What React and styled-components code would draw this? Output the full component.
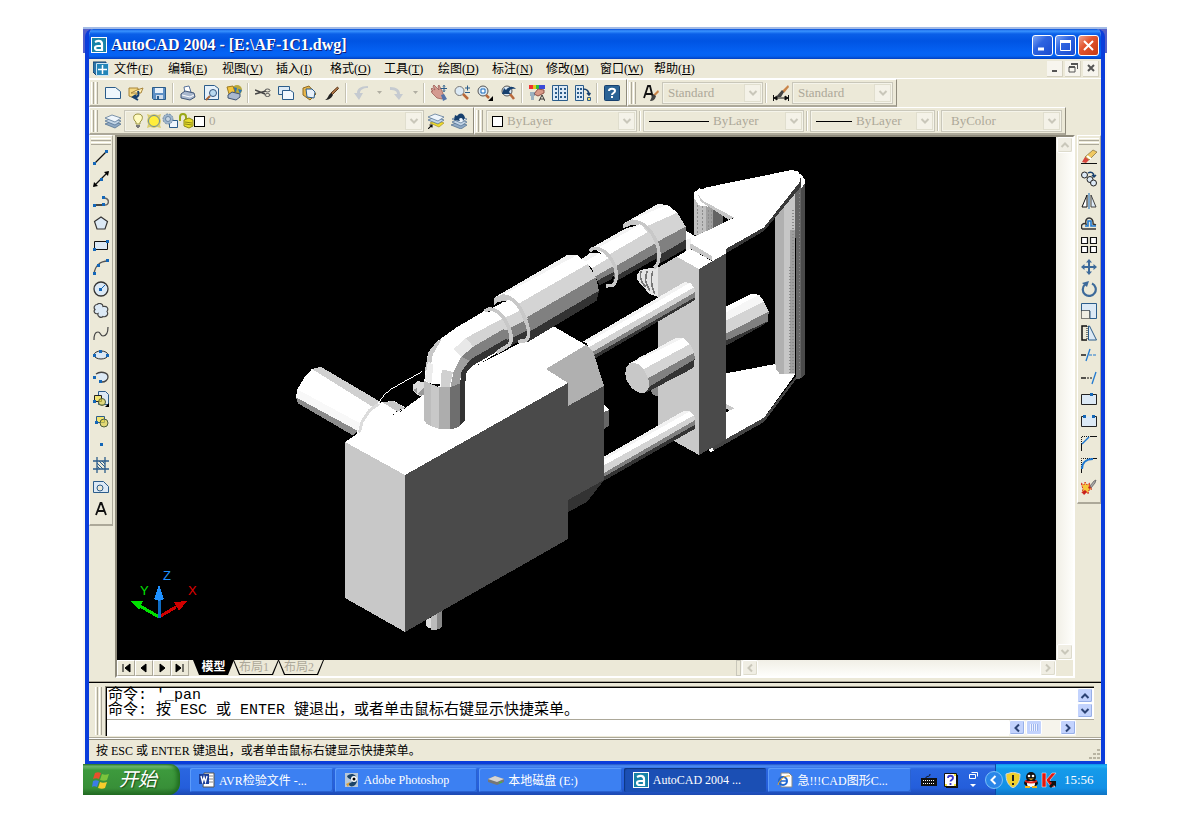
import React, { useState } from 'react';
import styled, { createGlobalStyle, css } from 'styled-components';

const GlobalStyle = createGlobalStyle`
  * { box-sizing: border-box; }
  body {
    margin: 0;
    background: #fff;
    font-family: "Liberation Serif", "Noto Sans CJK SC", serif;
    font-size: 12px;
    color: #000;
  }
  button, input, select {
    font: inherit;
    color: inherit;
    margin: 0;
    padding: 0;
    border: none;
    border-radius: 0;
    background: none;
  }
  svg { display: block; flex: none; }
`;

const Page = styled.div`
  padding: 27px 84px 27px 83px;
`;

const Desktop = styled.div`
  background: linear-gradient(#a3bbe6 2px, #5560c8 2px, #5560c8 26px, #fbfaf4 26px);
`;

const WindowArea = styled.div`
  padding: 2px 2px 0;
`;

const Window = styled.div`
  border: 4px solid #0a3ddb;
  border-top: none;
  border-bottom-width: 3px;
  border-radius: 8px 8px 0 0;
  background: #ece9d8;
  overflow: hidden;
`;

const TitleBar = styled.div`
  display: flex;
  align-items: center;
  gap: 4px;
  height: 30px;
  margin: 0 -4px;
  padding: 2px 6px 0;
  background: linear-gradient(#0a4fd8 0, #3a94ff 2px, #0a5fe8 5px, #0054e3 12px, #0563f5 24px, #0562f2 27px, #0340c0 30px);
`;

const Title = styled.h1`
  flex: 1;
  margin: 0;
  font-size: 16px;
  line-height: 20px;
  font-weight: bold;
  color: #fff;
  text-shadow: 1px 1px 0 #0f1e7a;
`;

const CaptionButton = styled.button`
  width: 21px;
  height: 21px;
  margin-left: -2px;
  display: flex;
  align-items: center;
  justify-content: center;
  border: 1px solid #fff;
  border-radius: 3px;
  background: ${props => props.$close
    ? 'linear-gradient(135deg, #f0a28c, #e2552f 40%, #c73a12)'
    : 'linear-gradient(135deg, #7fa6f5, #2e64e0 40%, #1a4bd0)'};
`;

const MenuBar = styled.div`
  display: flex;
  align-items: center;
  height: 20px;
  padding: 0 2px 0 4px;
  border-bottom: 1px solid #fff;
`;

const Menus = styled.nav`
  flex: 1;
  display: flex;
  padding-left: 5px;
`;

const MenuItem = styled.button`
  width: 54px;
  text-align: left;
  line-height: 18px;
  white-space: nowrap;
`;

const MdiButton = styled.button`
  width: 16px;
  height: 16px;
  margin-left: 2px;
  display: flex;
  align-items: center;
  justify-content: center;
  border-right: 1px solid #d5d1c0;
  border-bottom: 1px solid #d5d1c0;
  background: #f7f5ee;
`;

const ToolbarRow = styled.div`
  display: flex;
  height: 28px;
`;

const Toolbar = styled.div`
  display: flex;
  align-items: center;
  padding: 1px 3px 0 1px;
  border-top: 1px solid #fff;
  border-left: 1px solid #fff;
  border-right: 1px solid #8f8b7c;
  border-bottom: 2px solid #aca899;
`;

const gripStops = '#fff 1px, #ece9d8 1px, #ece9d8 2px, #aca899 2px, #aca899 3px, #ece9d8 3px, #ece9d8 4px, #fff 4px, #fff 5px, #ece9d8 5px, #ece9d8 6px, #aca899 6px';

const Grip = styled.span`
  flex: none;
  ${props => (props.$across ? css`
    width: 20px;
    height: 7px;
    margin: 2px 0 1px;
    background: linear-gradient(${gripStops});
  ` : css`
    width: 7px;
    align-self: stretch;
    margin: 1px 3px 1px 0;
    background: linear-gradient(90deg, ${gripStops});
  `)}
`;

const ToolButton = styled.button`
  flex: none;
  width: ${props => (props.$narrow ? '13px' : '23px')};
  height: 22px;
  display: flex;
  align-items: center;
  justify-content: center;
`;

const Separator = styled.span`
  flex: none;
  width: 2px;
  height: 20px;
  margin: 0 2px;
  border-left: 1px solid #c5c2b2;
  border-right: 1px solid #fff;
`;

const ComboFrame = styled.span`
  flex: none;
  display: flex;
  align-items: center;
  width: ${props => props.$width}px;
  height: 22px;
  padding: 1px;
  border: 1px solid #c9c7ba;
  box-shadow: inset 0 0 0 1px #f5f4ea;
`;

const ComboLead = styled.span`
  display: flex;
  align-items: center;
  padding-left: 4px;
`;

const ComboSelect = styled.select`
  flex: 1;
  min-width: 0;
  appearance: none;
  padding-left: 4px;
  font-size: 13px;
  line-height: 16px;
  color: #aca899;
  opacity: 1;
`;

const ComboArrow = styled.span`
  width: 17px;
  height: 18px;
  display: flex;
  align-items: center;
  justify-content: center;
  border: 1px solid #e0dece;
  background: #f4f2e8;
  color: #c9c7ba;
`;

const Swatch = styled.span`
  width: 11px;
  height: 11px;
  border: 1px solid #000;
  background: #fff;
`;

const LineSample = styled.span`
  width: ${props => props.$length}px;
  height: 1px;
  background: #000;
`;

const Workspace = styled.div`
  display: flex;
  align-items: flex-start;
  gap: 2px;
`;

const Palette = styled.div`
  flex: none;
  width: 24px;
  display: flex;
  flex-direction: column;
  align-items: center;
  padding-bottom: 4px;
  border: 1px solid #fff;
  border-right-color: #aca899;
  border-bottom: 2px solid #aca899;
`;

const Frame = styled.div`
  flex: 1;
  min-width: 0;
  border: 2px solid #8f8b7c;
  border-right-color: #fff;
  border-bottom-color: #fff;
  display: grid;
  grid-template-columns: 1fr 17px;
`;

const Viewport = styled.div`
  background: #000;
  svg { width: 100%; height: auto; }
`;

const VScroll = styled.div`
  display: flex;
  flex-direction: column;
  justify-content: space-between;
  align-items: center;
  background: linear-gradient(90deg, #f1efe6, #fefefb);
`;

const ScrollButton = styled.button`
  flex: none;
  width: 16px;
  height: ${props => (props.$short ? '15px' : '16px')};
  display: flex;
  align-items: center;
  justify-content: center;
  border: 1px solid #fff;
  border-radius: 2px;
  ${props => (props.$live ? css`
    background: #c3d3fd;
    box-shadow: inset -1px -1px 0 #98b0e8;
    color: #2c4374;
  ` : css`
    background: #f0eee4;
    box-shadow: inset -1px -1px 0 #dddbcc;
    color: #c9c7ba;
  `)}
`;

const TabStrip = styled.div`
  display: flex;
  height: 16px;
  min-width: 0;
`;

const TabNav = styled.button`
  width: 18px;
  display: flex;
  align-items: center;
  justify-content: center;
  border: 1px solid #fff;
  border-right-color: #aca899;
  border-bottom-color: #aca899;
`;

const Tabs = styled.div`
  flex: 1;
  display: flex;
  padding-left: 4px;
`;

const Tab = styled.button`
  width: ${props => (props.$active ? '41px' : '46px')};
  height: 15px;
  margin-right: -1px;
  padding: 0 1px 1px;
  background: #000;
  clip-path: polygon(0 0, 100% 0, calc(100% - 6px) 100%, 6px 100%);
`;

const TabLabel = styled.span`
  display: block;
  height: 14px;
  padding-right: ${props => (props.$active ? '0' : '4px')};
  line-height: 14px;
  overflow: hidden;
  clip-path: polygon(0 0, 100% 0, calc(100% - 6px) 100%, 6px 100%);
  background: ${props => (props.$active ? '#000' : '#ece9d8')};
  color: ${props => (props.$active ? '#fff' : '#aca899')};
  font-weight: ${props => (props.$active ? 'bold' : 'normal')};
`;

const HScroll = styled.div`
  flex: 0 1 320px;
  display: flex;
  justify-content: space-between;
  background: linear-gradient(#f1efe6, #fefefb);
`;

const SplitHandle = styled.span`
  width: 5px;
  border: 1px solid #c9c7ba;
  background: #ece9d8;
`;

const HScrollEdge = styled.span`
  display: flex;
  gap: 1px;
`;

const Divider = styled.div`
  height: 2px;
  margin-top: 3px;
  background: linear-gradient(#aca899 1px, #000 1px);
`;

const CommandArea = styled.div`
  display: flex;
  padding: 3px 7px 1px 6px;
`;

const CommandBox = styled.div`
  flex: 1;
  min-width: 0;
  padding: 1px 0 0 1px;
  border-top: 1px solid #8f8b7c;
  border-left: 1px solid #8f8b7c;
  box-shadow: inset 1px 1px 0 #000;
  background: #fff;
`;

const History = styled.div`
  display: flex;
  justify-content: space-between;
  height: 32px;
  border-bottom: 1px solid #aca899;
`;

const HistoryLines = styled.div`
  padding-left: 1px;
  font-family: "Liberation Mono", "Noto Sans CJK SC", monospace;
  font-size: 15px;
  line-height: 15px;
  white-space: pre;
`;

const HistoryScroll = styled.div`
  width: 17px;
`;

const CommandLine = styled.div`
  display: flex;
  height: 16px;
`;

const CommandInput = styled.input`
  flex: 1;
  min-width: 0;
  font-size: 13px;
  outline: none;
`;

const CommandScroll = styled.div`
  width: 67px;
  display: flex;
  gap: 1px;
  background: #f6f4ec;
`;

const Thumb = styled.span`
  flex: none;
  width: 16px;
  height: 15px;
  margin-right: auto;
  padding: 3px;
  border: 1px solid #fff;
  border-radius: 2px;
  background: repeating-linear-gradient(90deg, #eef3ff 0, #eef3ff 1px, #9fb6ee 1px, #9fb6ee 2px) content-box, #c3d3fd;
`;

const Corner = styled.span`
  width: 18px;
  background: #ece9d8;
`;

const StatusBar = styled.div`
  display: flex;
  justify-content: space-between;
  align-items: flex-end;
  height: 24px;
  padding-left: 7px;
  border-top: 1px solid #aca899;
  box-shadow: inset 0 1px 0 #fff, inset 0 2px 0 #8f8b7c;
  line-height: 20px;
`;

const TaskBar = styled.div`
  display: flex;
  height: 31px;
  background: linear-gradient(#1f50c0 0, #4d8ef5 2px, #2a66e0 5px, #245edb 24px, #1d49b0 31px);
`;

const StartButton = styled.button`
  flex: none;
  width: 97px;
  display: flex;
  align-items: center;
  gap: 9px;
  padding-left: 9px;
  border-radius: 0 10px 12px 0;
  background: linear-gradient(#2f7a2f 0, #7cc07a 2px, #3d9a3d 6px, #388f38 24px, #256a25 31px);
  box-shadow: inset -3px 0 4px #1f6b1f;
  color: #fff;
  font-size: 19px;
  font-style: italic;
  line-height: 26px;
  text-shadow: 1px 1px 1px #1c4d1c;
`;

const Tasks = styled.div`
  flex: 1;
  min-width: 0;
  display: flex;
  gap: 2px;
  padding: 4px 0 3px 10px;
`;

const Task = styled.button`
  flex: 1 1 0;
  min-width: 0;
  display: flex;
  align-items: center;
  gap: 4px;
  padding-left: 9px;
  border-radius: 2px;
  white-space: nowrap;
  color: #fff;
  background: ${props => (props.$active ? '#1b4fb4' : '#3c80f2')};
  box-shadow: ${props => (props.$active
    ? 'inset 1px 1px 1px #0e3680'
    : 'inset 1px 1px 0 #5c9bfa, inset -1px -1px 0 #2a62d0')};
`;

const LanguageBar = styled.div`
  flex: none;
  width: 84px;
  display: flex;
  align-items: center;
  gap: 6px;
  padding-left: 10px;
`;

const Tray = styled.div`
  flex: none;
  width: 112px;
  display: flex;
  align-items: center;
  gap: 2px;
  color: #fff;
  border-left: 1px solid #0c49a8;
  background: linear-gradient(#0c8fe8 0, #22b4f8 2px, #149bea 5px, #1290e6 24px, #0f74c4 31px);
`;

const TrayToggle = styled.button`
  margin-left: -11px;
`;

const Clock = styled.time`
  margin-left: 5px;
  font-size: 13px;
`;

// 16x16 toolbar drawings
const node = (x, y) => <rect x={x} y={y} width="3" height="3" fill="#1467b8" />;
const paper = '#dce9f5';
const ink = '#2b5c8a';

const glyphs = {
  newDoc: <path d="M.5 2.5h10l5 4v7H.5z" fill="#eef6fc" stroke={ink} />,
  open: <g><path d="M1 3h9v4l-4 6-5-2z" fill="#f5d984" stroke="#a8853a" /><path d="M3 8l6-3 6-2-2 5z" fill="#fff0b8" stroke="#a8853a" /><path d="M7 12c4 0 4-3 3-6M8 10l-3 2 5 3" fill="none" stroke="#17406e" strokeWidth="2" /></g>,
  save: <g><path d="M1.5 2.5h13v12h-12l-1-1z" fill="#5d8fc4" stroke={ink} /><path d="M4 3h8v5H4z" fill="#e8f1fa" /><path d="M5 10h7v4H5z" fill="#cfdceb" /><path d="M6 11h2v3H6z" fill={ink} /></g>,
  print: <g><path d="M4 2l5-1 2 6-6 1z" fill="#fff" stroke="#56719b" /><path d="M1 9l4-3 9 2 1 4-5 3-9-2z" fill="#aab9cf" stroke="#3f5475" /><path d="M2 10l8 2 4-2" stroke="#fff" fill="none" /></g>,
  preview: <g><path d="M1.5.5h10l4 3v11h-14z" fill="#e6f1fa" stroke={ink} /><circle cx="10" cy="8" r="3.5" fill="#b8d9f0" stroke="#35557c" /><path d="M7 11l-4 4" stroke="#a8663a" strokeWidth="2" /></g>,
  publish: <g><circle cx="11" cy="5" r="5" fill="#b8a83c" /><path d="M7 2l4 1-1 4-3 1zM12 4l4 1-2 4z" fill="#2b75b8" /><path d="M1 2l6-1 2 6-6 2z" fill="#f3c43c" stroke="#9a7a22" /><path d="M2 10l4-3 8 2v3l-4 3-8-2z" fill="#aab9cf" stroke="#3f5475" /></g>,
  cut: <g fill="none"><path d="M0 5l10 4M0 9l11-3" stroke="#444" strokeWidth="1.5" /><ellipse cx="12.5" cy="5.5" rx="2.5" ry="1.5" stroke="#555" /><ellipse cx="12.5" cy="10" rx="2.5" ry="1.5" stroke="#555" /></g>,
  copy: <g fill={paper} stroke={ink}><path d="M.5 1.5h11v8H.5z" /><path d="M4.5 5.5h8l3 2v7h-11z" fill="#f2f8fd" /></g>,
  paste: <g><path d="M2 3l6-2 7 8-6 6-7-5z" fill="#e8b64a" stroke="#8f6a22" /><path d="M5 4h6l3 3-1 6-7-1z" fill="#e8f1fa" stroke={ink} /></g>,
  match: <g><path d="M13.500 2l1 1.500-6 6-1.500-1.500z" fill="#b07848" stroke="#5f3a1c" /><path d="M7 8l2 2c-2 4-5 5-8 5 3-1 3-5 6-7z" fill="#222" /></g>,
  undo: <path d="M15 1C7 1 4 4 4 8H1l5 7 4-7H7c0-3 3-5 8-5z" fill="#c5cad0" />,
  redo: <path d="M1 2c7 0 10 3 10 7h3l-4 6-5-6h3c0-3-2-4-7-4z" fill="#c5cad0" />,
  drop: <path d="M6 6h5l-2.500 3z" fill="#b0aea2" />,
  pan: <g><path d="M2 1l1-1 5 5-1-4 1-1 3 6 2 5-2 3-5-1-5-5-1-2h2L0 4l1-1 3 2z" fill="#d49a90" stroke="#94534d" strokeWidth=".7" /><path d="M10 10l3-1 3 5-4 2z" fill="#5573a8" /><path d="M13 0v7M9.500 3.500h7M12 1.500l1-1 1 1M12 5.500l1 1 1-1" stroke={ink} fill="none" /></g>,
  zoomRt: <g><circle cx="5.5" cy="6" r="4.5" fill="#dceaf5" stroke="#777" /><path d="M9 9l5 5" stroke="#b8683a" strokeWidth="2.5" /><path d="M11 3h5M13.5.5v5M11 7.5h5" stroke={ink} /></g>,
  zoomWin: <g><circle cx="6" cy="6" r="5" fill="#dceaf5" stroke="#555" /><path d="M4 4h4v4H4z" fill="#fff" stroke="#1467b8" /><path d="M9 10l3 3" stroke="#b8683a" strokeWidth="2.5" /><path d="M16 11v5h-5z" /></g>,
  zoomPrev: <g><circle cx="7" cy="6" r="5" fill="#dceaf5" stroke="#555" /><path d="M10 9l4 5" stroke="#b8683a" strokeWidth="2.5" /><path d="M2 9l2-6 2 2c3-4 7-4 10-1-4-1-6 0-7 3l2 2z" fill="#17406e" /></g>,
  props: <g><path d="M0 0h4v4H0z" fill="#e33" /><path d="M4 0h3v4H4z" fill="#e5c51c" /><path d="M7 0h3v4H7z" fill="#2bc43a" /><path d="M10 0h6v4h-6z" fill="#3b4bd8" /><path d="M5 9l4-5 6 1v3l-6 3z" fill="#d89a88" stroke="#8f5248" /><path d="M1 8h5M1 10h5M2 12h3M2 14h3" stroke="#4d7aa8" /><path d="M10 16l3-6 3 6M11 14h4" fill="none" stroke="#333" /></g>,
  center: <g><path d="M.5.5h15v15H.5z" fill={paper} stroke={ink} /><path d="M3 3h2v2H3zM3 7h2v2H3zM3 11h2v2H3zM8 3h2v2H8zM12 3h2v2h-2zM8 7h2v2H8zM12 7h2v2h-2zM8 11h2v2H8zM12 11h2v2h-2z" fill={ink} /><path d="M6.5 1v14" stroke={ink} /></g>,
  palettes: <g><path d="M.5.5h8v15h-8z" fill={paper} stroke={ink} /><path d="M2 3h2v2H2zM5 3h2v2H5zM2 7h2v2H2zM5 7h2v2H5zM2 11h2v2H2zM5 11h2v2H5z" fill={ink} /><path d="M8 4c4 0 6 2 6 6m-2-2l2 2 1.5-2" fill="none" stroke="#17406e" strokeWidth="1.5" /><path d="M12.5 12.5h3v3h-3z" fill="#f6e26a" stroke={ink} /></g>,
  help: <g><rect x=".5" y=".5" width="15" height="15" rx="1" fill="#2b6395" stroke="#17406e" /><path d="M5 6c0-3 6-3 6 0 0 2-3 2-3 4M8 11v2" fill="none" stroke="#fff" strokeWidth="2" /></g>,
  textStyle: <g><path d="M1 13L5 1h2l3 12M3 9h6" fill="none" stroke="#111" strokeWidth="1.8" /><path d="M15 5l1 2-4 4-2-1z" fill="#c98448" /><path d="M10 9l3 2c-1 4-3 5-6 5z" fill="#444" /></g>,
  dimStyle: <g><path d="M.5 10v6M15.5 10v6M1 13h14M1 13l3-2v4zM15 13l-3-2v4z" stroke="#111" /><path d="M15 0l1 2-5 6-2-2z" fill="#c98448" /><path d="M9 5l2 2-3 5H3z" fill="#444" /></g>,
  layers: <g stroke="#4b6a8c" strokeWidth=".7"><path d="M0 11l7-3 9 3-6 4z" fill="#8fa9c4" /><path d="M0 8l7-3 9 3-6 4z" fill="#c3d5e6" /><path d="M0 5l7-3 9 3-6 4z" fill="#eef5fb" /></g>,
  layerSet: <g stroke="#4b6a8c" strokeWidth=".7"><path d="M2 10l6-3 8 3-5 4z" fill="#f0dc2a" stroke="#a8922a" /><path d="M0 7l7-3 9 3-6 4z" fill="#c3d5e6" /><path d="M0 4l7-3 9 3-6 4z" fill="#eef5fb" /><path d="M0 16l4-4M1.5 12H4v2.5" stroke="#111" strokeWidth="1.2" fill="none" /></g>,
  layerPrev: <g stroke="#4b6a8c" strokeWidth=".7"><path d="M0 12l7-3 9 3-6 4z" fill="#8fa9c4" /><path d="M1 9l7-3 8 3-6 4z" fill="#c3d5e6" /><path d="M1 6l7-3 8 3-6 4z" fill="#eef5fb" /><path d="M3 7l1-5 2 1c3-4 7-3 8 2l-2 3c0-3-2-4-4-2l1 2z" fill="#17406e" stroke="none" /></g>,
  bulb: <g><path d="M8 1c-6 0-5 6-2 8v2h4V9c3-2 4-8-2-8z" fill="#fffbc0" stroke="#9a9340" /><path d="M6 12h4v2H6zM7 14h2v1H7z" fill="#777" /></g>,
  sun: <g><path d="M1 1l3 1 4-1 4 1 3-1-1 4 1 3-1 4 1 3-4-1-3 1-4-1-3 1 1-4-1-3 1-4z" fill="#d8cc6c" /><circle cx="8" cy="8" r="5.5" fill="#ffee3c" stroke="#6c8a9a" /></g>,
  vpFreeze: <g><path d="M7.5 7.5h8v7h-8z" fill="#eef5fb" stroke={ink} /><circle cx="6" cy="6" r="5" fill="#9fb6cc" stroke="#6c88a5" strokeDasharray="2 1" /><circle cx="6" cy="6" r="2.5" fill="#c8d6e3" stroke="#6c88a5" /></g>,
  lock: <g><path d="M2 8V4c0-4 6-4 6 0v3" fill="none" stroke="#9aa818" strokeWidth="2" /><path d="M6 7l5-2 4 2v6l-4 2-5-2z" fill="#e6dc2c" stroke="#8f8a14" /><path d="M7 9l7 1M7 11l7 1" stroke="#8f8a14" /></g>,

  line: <g><path d="M2 14L14 2" stroke="#111" strokeWidth="1.2" />{node(0, 13)}{node(12, 1)}</g>,
  xline: <g><path d="M1 15L15 1" stroke="#111" strokeWidth="1.2" /><path d="M0 16l1-5 4 4zM16 0l-1 5-4-4z" />{node(7, 7)}</g>,
  pline: <g><path d="M1 12h10" stroke="#111" strokeWidth="1.5" /><path d="M10 5c7-1 7 8 1 7" fill="none" stroke="#666" strokeWidth="1.5" />{node(0, 11)}{node(9, 10)}{node(9, 3)}</g>,
  polygon: <path d="M8 2l6.5 4.5-2.5 7.5H4L1.5 6.5z" fill={paper} stroke="#333" strokeWidth="1.2" />,
  rect: <g><path d="M1.5 4.5h13v8h-13z" fill={paper} stroke="#111" />{node(0, 11)}{node(13, 3)}</g>,
  arc: <g><path d="M1 15C2 7 7 2 15 2" fill="none" stroke="#555" strokeWidth="1.3" />{node(0, 13)}{node(4, 5)}{node(13, 0)}</g>,
  circle: <g><circle cx="8" cy="8" r="7" fill={paper} stroke="#333" strokeWidth="1.3" /><path d="M8 8l4-4" stroke="#1467b8" />{node(6, 7)}</g>,
  cloud: <path d="M4 1.500c2-2 6-1 6 2 4-1 6 2 4 5 2 3-1 6-4 5-2 2-6 0-5-3-3 1-5-2-3-4-2-2 0-5 2-5z" fill={paper} stroke="#444" strokeWidth="1.2" />,
  spline: <path d="M1 15c0-5 1-8 4-8 3 0 2 4 5 4 4 0 5-5 5-9" fill="none" stroke="#444" strokeWidth="1.2" />,
  ellipse: <g><ellipse cx="8" cy="8" rx="7" ry="4" fill={paper} stroke="#333" />{node(0, 7)}{node(13, 7)}{node(6, 3)}</g>,
  ellArc: <g><path d="M3 5c4-3 12-2 12 3 0 3-3 5-6 5" fill={paper} stroke="#444" strokeWidth="1.3" />{node(0, 7)}{node(6, 11)}</g>,
  insert: <g><path d="M5.5.5h7l3 3v10h-10z" fill={paper} stroke={ink} /><path d="M1.5 4.5h7v6h-7z" fill="#f2e470" stroke="#222" /><circle cx="9" cy="11" r="3.5" fill="#e0d04c" fillOpacity=".7" stroke="#4d5d3c" /><path d="M16 12v4h-4z" />{node(0, 9)}</g>,
  block: <g><path d="M3.5 3.5h8v6h-8z" fill="#f2e470" stroke={ink} /><circle cx="11" cy="10" r="4" fill="#e0d04c" fillOpacity=".7" stroke="#4d5d3c" />{node(2, 8)}</g>,
  point: node(7, 8),
  hatch: <g stroke={ink} fill="none"><path d="M4 0v16M12 0v16M0 4h16M0 12h16" strokeWidth="1.3" /><path d="M4 6l6 6M4 9l3 3M6 4l6 6M9 4l3 3" /></g>,
  region: <g><path d="M.5 2.5h10l5 5v6H.5z" fill={paper} stroke={ink} /><circle cx="7" cy="9" r="3" fill="#ece9d8" stroke={ink} /></g>,
  mtext: <path d="M3 14L7.5 2h1L13 14M4.5 10h7" fill="none" stroke="#111" strokeWidth="1.8" />,

  erase: <g><path d="M0 14.5h16" stroke="#111" /><path d="M12 1l4 2-8 8-4-3z" fill="#f0c860" stroke="#7c6a3a" strokeWidth=".7" /><path d="M4 8l4 3-3 3-4-1z" fill="#d8463c" /><path d="M6 7l4 3" stroke="#fff" strokeWidth="2" /></g>,
  copyObj: <g><circle cx="3.5" cy="4" r="3" fill={paper} stroke="#222" /><circle cx="9" cy="8.5" r="3" fill={paper} stroke="#222" /><circle cx="12.5" cy="12" r="3" fill={paper} stroke="#222" /><path d="M7 2c3-2 6 0 6 3m-2-1l2 2 2-2" fill="none" stroke="#17406e" strokeWidth="1.5" /></g>,
  mirror: <g><path d="M6 2v12H1z" fill="#fff" stroke="#111" /><path d="M10 2v12h5z" fill={paper} stroke="#444" /><path d="M8 0v16" stroke="#1467b8" /></g>,
  offset: <g fill="none"><path d="M1 14h14M1 14c-2-5 2-6 4-5-2-8 8-8 7 0l3 1" stroke="#333" strokeWidth="1.4" /><path d="M4 11h3V6h3v5h5" stroke="#1e78d0" strokeWidth="1.6" /></g>,
  array: <g fill="#fff" stroke="#111" strokeWidth="1.2"><path d="M.5.5h6v6h-6zM9.5.5h6v6h-6zM.5 9.5h6v6h-6zM9.5 9.5h6v6h-6z" /></g>,
  move: <path d="M8 0l3 3.5H9V7h3.5V5L16 8l-3.5 3V9H9v3.5h2L8 16l-3-3.5h2V9H3.5v2L0 8l3.5-3v2H7V3.5H5z" fill="#3d6a9a" />,
  rotate: <g><path d="M11 2.5a6.5 6.5 0 1 1-7 1" fill="none" stroke="#3d6a9a" strokeWidth="2.2" /><path d="M1 2l7-2-2 6z" fill="#3d6a9a" /></g>,
  scale: <g><path d="M.5.5h15v15H9V8H.5z" fill={paper} stroke={ink} /><path d="M.5 7.5h8v8h-8z" fill="#f0eee2" stroke="#111" strokeDasharray="1 1" /></g>,
  stretch: <g><path d="M6 1H1v14h5" fill="none" stroke="#111" strokeWidth="1.5" /><path d="M7.500 1h1l7 14h-8z" fill={paper} stroke={ink} /><path d="M6 1v14" stroke="#111" strokeDasharray="1 1" /></g>,
  trim: <g><path d="M0 8h5" stroke="#111" strokeWidth="1.4" /><path d="M8 8h8" stroke="#1e78d0" strokeDasharray="3 1" /><path d="M9 2L5 14" stroke="#1e78d0" strokeWidth="1.3" /></g>,
  extend: <g><path d="M0 9h5" stroke="#111" strokeWidth="1.4" /><path d="M6 9h6" stroke="#111" strokeDasharray="2 1" /><path d="M15 3l-4 12" stroke="#1e78d0" strokeWidth="1.3" /></g>,
  breakPt: <g><path d="M.5 3.5h15v10H.5z" fill={paper} stroke="#222" />{node(9, 2)}</g>,
  breakObj: <g><path d="M3.5 3.5h-3v10h15v-10h-3" fill={paper} stroke="#222" />{node(2, 2)}{node(11, 2)}</g>,
  chamfer: <g fill="none"><path d="M.5 16V9M9 1.5h7" stroke="#111" /><path d="M.5 9V1.5H9" stroke="#111" strokeDasharray="1 1" /><path d="M1 9l7-7" stroke="#1e78d0" strokeWidth="1.5" /></g>,
  fillet: <g fill="none"><path d="M.5 16v-4M12 1.5h4" stroke="#111" /><path d="M.5 12V1.5H12" stroke="#111" strokeDasharray="1 1" /><path d="M1 12C1 6 5 2 12 2" stroke="#1e78d0" strokeWidth="2" /></g>,
  explode: <g><path d="M0 4l3 2 1-3 2 3 3-2-1 4 3 2-3 1-1 4-2-3-4 2 1-4z" fill="#f6c83c" stroke="#d8302c" strokeDasharray="2 1" /><path d="M9 7l4-5 2-1-1 3-4 5z" fill="#aaa" stroke="#555" strokeWidth=".7" /><path d="M1 13l3-2 2 2-3 3zM7 8l2-1 1 2-2 1z" fill="#c8201c" /></g>,

  acad: <g><rect x=".5" y=".5" width="15" height="15" fill="#1783a8" stroke="#fff" /><path d="M4 5c4-2 7-1 7 2v6H7c-4 0-4-4 0-4h4" fill="none" stroke="#fff" strokeWidth="2.2" /></g>,
  dwg: <g><path d="M0 1h13v13H3l-3-3z" fill="#2b75a8" stroke="#17406e" /><path d="M3.500 2.500h12v12h-12z" fill="#2385b8" stroke="#cfe6f5" /><path d="M9.5 4v9M5 8.5h9" stroke="#fff" strokeWidth="1.5" /></g>,
  word: <g><path d="M5 1h10v14H4z" fill="#fff" stroke="#555" /><path d="M8 4h6M8 7h6M8 10h6" stroke="#888" /><path d="M0 2h10v10H0z" fill="#1c3f9a" /><path d="M2 4l1.5 6L5 5l1.5 5L8 4" fill="none" stroke="#fff" strokeWidth="1.3" /></g>,
  photoshop: <g><path d="M1 1h13v14H1z" fill="#b8c8d8" /><path d="M3 4c4-4 10-2 10 4s-6 8-8 5 3-1 3-4-4-1-5-5z" fill="#1c4468" /><circle cx="10" cy="7" r="3" fill="#fff" /><circle cx="10" cy="7" r="1.5" /><path d="M2 12l4-2-2 5z" fill="#d8a03c" /></g>,
  disk: <g><path d="M0 7l7-3 9 3v3l-7 3-9-3z" fill="#777" /><path d="M0 7l7-3 9 3-7 3z" fill="#d5d5d5" /><path d="M11 11l3-1" stroke="#3c3" /></g>,
  ie: <g><path d="M4 1h8l3 3v11H4z" fill="#fff" stroke="#888" /><circle cx="6" cy="9" r="4" fill="none" stroke="#1e66d0" strokeWidth="2" /><path d="M3 9h7" stroke="#1e66d0" strokeWidth="1.5" /><path d="M1 13C2 8 8 3 13 4" fill="none" stroke="#e8a82c" /></g>,
  keyboard: <g><path d="M0 6h16v8H0z" fill="#111" /><path d="M2 8.5h12M2 11.5h12" stroke="#fff" strokeDasharray="1 1" /><path d="M5 6c0-3 4 0 4-4" stroke="#111" fill="none" /></g>,
  helpBox: <g><path d="M3 3h12v13H3z" fill="#111" /><path d="M1.500 1.500h12v13h-12z" fill="#fff" stroke="#111" /><path d="M5 6c0-3 5-3 5 0 0 2-2.500 2-2.500 3.500M7.500 11v2" fill="none" stroke="#3a3ad0" strokeWidth="1.8" /><path d="M12 2v2M2 13h2M11 13h2" stroke="#f4e43c" strokeWidth="2" /></g>,
  restoreBar: <g fill="none" stroke="#fff"><path d="M6.5.5h6v4M4.5 2.5h6v4h-6z" /><path d="M5 12h6l-3 3z" fill="#fff" stroke="none" /></g>,
  shield: <g><path d="M8 0l7 2c0 7-2 11-7 14C3 13 1 9 1 2z" fill="#f0d02c" stroke="#cfd6de" /><path d="M8 3v6M8 11v2" stroke="#222" strokeWidth="2" /></g>,
  qq: <g><ellipse cx="8" cy="5" rx="5" ry="5" fill="#111" /><ellipse cx="8" cy="11" rx="7" ry="4" fill="#111" /><ellipse cx="8" cy="12" rx="4" ry="3" fill="#fff" /><path d="M2 8c4 2 8 2 12 0v2c-4 2-8 2-12 0z" fill="#e0241c" /><circle cx="6" cy="4" r="1.3" fill="#fff" /><circle cx="10" cy="4" r="1.3" fill="#fff" /><path d="M5 6.5h6l-3 1.5z" fill="#f4b41c" /><path d="M2 15h5M9 15h5" stroke="#f4b41c" strokeWidth="2" /></g>,
  kav: <g><path d="M1 1h4v14H1zM5 8l6-7h4l-6 7 5 7h-4z" fill="#e3170f" stroke="#fff" strokeWidth=".5" /><path d="M8 9h7v6l-2-2-3 3-2-2 3-3z" fill="#111" /></g>,
};

const Glyph = ({ name, size = 16 }) => (
  <svg width={size} height={size} viewBox="0 0 16 16" aria-hidden="true">{glyphs[name]}</svg>
);

const Chevron = ({ dir }) => {
  const turn = { down: 0, left: 90, up: 180, right: 270 }[dir];
  return (
    <svg width="10" height="10" viewBox="0 0 10 10" aria-hidden="true">
      <path d="M1.5 3L5 6.5 8.5 3" fill="none" stroke="currentColor" strokeWidth="2" transform={`rotate(${turn} 5 5)`} />
    </svg>
  );
};

const Combo = ({ label, value, width, children }) => (
  <ComboFrame $width={width}>
    {children && <ComboLead>{children}</ComboLead>}
    <ComboSelect aria-label={label} defaultValue={value} disabled>
      <option>{value}</option>
    </ComboSelect>
    <ComboArrow><Chevron dir="down" /></ComboArrow>
  </ComboFrame>
);

// each facet fills the strip between two neighbouring edges [x1, y1, x2, y2]
const Facets = ({ edges, fills }) => fills.map((fill, i) => {
  const [a, b, c, d] = edges[i];
  const [e, f, g, h] = edges[i + 1];
  return <polygon key={i} fill={fill} points={`${a},${b} ${c},${d} ${g},${h} ${e},${f}`} />;
});

const steel = ['#f3f3f3', '#fff', '#d4d4d4', '#808080', '#333'];

const Model = () => (
  <svg viewBox="117 137 939 523" shapeRendering="crispEdges" role="img" aria-label="AF-1C1">
    {/* handle, plate and rods */}
    <g transform="translate(560 160) scale(.33333)">
      <path d="M403 110h40v120h-28l-12-6z" fill="#c0c0c0" />
      <path d="M437 120h26v90l-26 16z" fill="#a0a0a0" />
      <path d="M460 140h28v55l-28 16z" fill="#646464" />
      <path d="M412 135v95M428 138v85M446 150v70M454 150v60" stroke="#8c8c8c" strokeWidth="3" strokeDasharray="6 5" />
      <path d="M403 115v-18l15-12 26 10v45l-28-4z" fill="#fff" />
      <path d="M646 150l60-75v570h-46l-14-17z" fill="#b0b0b0" />
      <path d="M672 120l34-45v570h-34z" fill="#c6c6c6" />
      <path d="M706 75h18v580l-16 3z" fill="#646464" />
      <path d="M724 70l10-10v585l-10 10z" fill="#4a4a4a" />
      <path d="M698 210v430" stroke="#a0a0a0" strokeWidth="14" />
      <path d="M690 320v320M700 150v490" stroke="#8c8c8c" strokeWidth="6" strokeDasharray="3 6" />
      <path d="M718 100v540" stroke="#888" strokeWidth="4" strokeDasharray="3 8" />
      <path d="M716 40l10 6 8 12v14l-10 12-12-10z" fill="#fff" />
      <path d="M723 52v28L612 213 498 280v-14l114-66z" fill="#383838" />
      <path d="M414 104l8 20 84 55 17-6-90-60z" fill="#c8c8c8" />
      <path d="M435 83L690 31l22 1 10 14-1 18-109 138-155 88-80-47 146-70-95-51-13-18 6-12z" fill="#fff" />
      <path d="M378 213l46 25-26 14-20 0z" fill="#fff" />
      <path d="M378 240l14-5 0 30-14 8z" fill="#f0f0f0" />
      <Facets
        edges={[[498, 440, 572, 402], [498, 457, 597, 404], [498, 482, 612, 424], [498, 521, 626, 455], [498, 542, 624, 484], [498, 557, 612, 494]]}
        fills={['#fff', '#f6f6f6', '#d4d4d4', '#808080', '#333']}
      />
      <path d="M498 640l148-28 2 16 12 15h46L612 773l-114 66z" fill="#fff" />
      <path d="M708 648v10L612 786 455 875l-6-10 49-28 114-64z" fill="#444" />
      <path d="M445 870l12-6 6 8-10 4z" fill="#fff" />
      <path d="M498 732l26 13-14 6-12-5z" fill="#c8c8c8" />
      <path d="M498 747l13 3-13 8z" fill="#000" />
      <path d="M230 345l12-15 25-5 30-5v92l-28-10-20-22-17-20z" fill="#e4e4e4" />
      <path d="M244 332q-10 22 12 48M262 332q-14 30 8 60M278 334q-10 30 6 68" stroke="#777" strokeWidth="5" fill="none" />
      <path d="M295 322l55-32 67 37v558l-72-40-50-30z" fill="#c8c8c8" />
      <path d="M350 290l40-24 64 36 44-20-81 45z" fill="#fff" />
      <path d="M455 288l43-26v20l-43 24z" fill="#fff" />
      <path d="M392 250l64 38v14l-66-36z" fill="#c8c8c8" />
      <path d="M417 327l81-47v558l-81 47z" fill="#4a4a4a" />
      <path d="M232 596l22-12 10 14-30 20z" fill="#ddd" />
      <path d="M272 690l23-12v32l-16-6z" fill="#888" />
      <Facets
        edges={[[68, 545, 372, 367], [80, 549, 390, 368], [86, 562, 402, 382], [94, 578, 406, 396], [100, 587, 405, 412], [104, 596, 405, 420]]}
        fills={steel}
      />
      <Facets
        edges={[[200, 615, 345, 535], [222, 608, 370, 533], [250, 628, 390, 552], [264, 655, 403, 578], [268, 680, 404, 598], [256, 699, 400, 624]]}
        fills={steel}
      />
      <path d="M196 640l3-18 14-13 20 2 17 16 15 28 3 26-10 16-16 3-26-14-17-26z" fill="#c8c8c8" />
      <Facets
        edges={[[132, 890, 372, 752], [132, 899, 390, 754], [132, 916, 402, 766], [132, 939, 406, 780], [132, 950, 405, 794], [132, 962, 405, 806]]}
        fills={steel}
      />
      {/* pipe, upper end: collar, sleeve, neck, each ring over its joint */}
      <Facets
        edges={[[188, 192, 292, 133], [205, 184, 322, 134], [244, 206, 352, 158], [276, 254, 377, 200], [288, 292, 379, 238], [286, 318, 378, 266]]}
        fills={steel}
      />
      <Facets
        edges={[[90, 266, 195, 206], [106, 268, 240, 194], [136, 290, 264, 216], [154, 326, 290, 248], [162, 352, 296, 275], [158, 370, 292, 294]]}
        fills={steel}
      />
      <path d="M188 206v-14l28-14 26 6-6 10-20 0z" fill="#c8c8c8" />
      <path d="M194 198c16-20 54-20 80 20 26 36 32 90 8 106" stroke="#c8c8c8" strokeWidth="10" fill="none" />
      <Facets
        edges={[[60, 300, 92, 278], [75, 305, 118, 280], [95, 325, 146, 294], [105, 350, 164, 316], [112, 362, 166, 334], [118, 376, 154, 358]]}
        fills={steel}
      />
      <path d="M90 274c8-16 40-10 60 18 22 30 26 70 8 84l-20 2" stroke="#c8c8c8" strokeWidth="10" fill="none" />
    </g>

    {/* housing */}
    <path d="M426 618h5v10h-3l-2-3z" fill="#ddd" />
    <path d="M431 612h6v18h-6z" fill="#bbb" />
    <path d="M437 610h5v16l-3 3h-2z" fill="#888" />
    <path d="M604 404l5 6v16l-5 3z" fill="#666" />
    <path d="M604 404l5 6-5 2z" fill="#fff" />
    <g transform="translate(290 250) scale(.33333)">
      <Facets
        edges={[[92, 350, 272, 456], [66, 357, 250, 472], [46, 378, 230, 492], [22, 418, 214, 522], [18, 442, 204, 543], [24, 460, 190, 557]]}
        fills={['#d0d0d0', '#fff', '#fff', '#f8f8f8', '#8c8c8c']}
      />
      <path d="M270 458l40-6 36 20-30 24-110 64-6-12 20-48z" fill="#fff" />
      <path d="M278 457l32-4 36 20-24 12z" fill="#c8c8c8" />
      <path d="M268 460l-30 22-22 34-8 32" stroke="#dcdcdc" strokeWidth="9" fill="none" />
      <path d="M396 365l-92 52-20 16-20 28" stroke="#fff" strokeWidth="3" fill="none" />
      <path d="M368 405l16-12 18 4v46l-22-10-12-14z" fill="#dcdcdc" />
      <path d="M370 420l12-8v20zM384 432l18-20v30z" fill="#999" />
    </g>
    <polygon points="345,442 357,434 400,412 423,395 466,371 553,326 586,345 546,369 568,383 405,475" fill="#fff" />
    <polygon points="345,442 405,475 405,632 345,598" fill="#c8c8c8" />
    <polygon points="405,475 568,383 568,539 405,632" fill="#4a4a4a" />
    <polygon points="586,345 593,351 604,386 568,406 568,383 546,369" fill="#b0b0b0" />
    <polygon points="568,406 604,386 604,480 568,500" fill="#4a4a4a" />
    <polygon points="568,500 604,480 587,502 568,512" fill="#333" />

    {/* pipe, lower end */}
    <g transform="translate(290 250) scale(.33333)">
      <path d="M310 494h3M318 484h3M330 480h3" stroke="#000" strokeWidth="3" />
      <path d="M402 398l10-78 28-45 60-43 83-49 42 7 25 25 5 70-35 25-90 55-6 47z" fill="#fff" />
      <path d="M408 385l-2-30 10-50 24-30 16-10-28 50-12 70z" fill="#c8c8c8" />
      <path d="M404 390l10-56 16 10-6 58z" fill="#ececec" />
      <path d="M455 358l34 8-10 46h-26z" fill="#d0d0d0" />
      <path d="M528 264l108-58 10 28-96 56z" fill="#d4d4d4" />
      <path d="M490 298l38-34 22 26-36 30z" fill="#e8e8e8" />
      <path d="M514 320l24 12-24 34-6 40-26 6 8-46z" fill="#a0a0a0" />
      <path d="M550 290l96-56 10 28-104 60-14 10-24-12z" fill="#808080" />
      <path d="M552 322l104-60v22l-106 62-20 18-6 48-14-6 4-40 24-34z" fill="#333" />
      <path d="M402 392l21 10v127l-14-8-7-10z" fill="#bdbdbd" />
      <path d="M423 402l24 10v125l-24-8z" fill="#c8c8c8" />
      <path d="M447 412h33v125h-33z" fill="#adadad" />
      <path d="M480 412l30-12v128l-18 8-12 1z" fill="#6e6e6e" />
      <path d="M510 400l14-34v148l-14 14z" fill="#333" />
      <Facets
        edges={[[614, 142, 832, 15], [628, 140, 862, 15], [670, 170, 893, 42], [700, 208, 918, 82], [710, 250, 927, 122], [710, 278, 920, 152]]}
        fills={steel}
      />
      <Facets
        edges={[[590, 184, 640, 156], [600, 184, 676, 158], [630, 210, 698, 178], [645, 242, 714, 206], [652, 270, 720, 238], [654, 292, 712, 262]]}
        fills={['#fff', '#fff', '#d4d4d4', '#808080', '#333']}
      />
      <path d="M584 184c16-16 48-2 66 36 18 34 16 62 2 68l-32 20" stroke="#c8c8c8" strokeWidth="11" fill="none" />
      <path d="M612 166v-22l28-12 22 6-10 14-30 4z" fill="#c8c8c8" />
      <path d="M630 146c24-14 50 6 68 44 20 42 26 72 6 82l-20 3" stroke="#c8c8c8" strokeWidth="11" fill="none" />
    </g>

    {/* axes */}
    <path d="M159 617l17-10" stroke="#d00000" strokeWidth="3" />
    <path d="M187 601l-13 1 5 9z" fill="#d00000" />
    <path d="M159 617l-19-11" stroke="#00e000" strokeWidth="3" />
    <path d="M130 601l13 0-4 9z" fill="#00e000" />
    <path d="M159 618v-20" stroke="#0f6cc4" strokeWidth="3" />
    <path d="M159 585l-5 14 5 2 5-2z" fill="#1e90ff" />
    <g fontFamily="Liberation Sans, sans-serif" fontSize="13">
      <text x="163" y="580" fill="#1e90ff">Z</text>
      <text x="140" y="595" fill="#00e000">Y</text>
      <text x="188" y="595" fill="#e00000">X</text>
    </g>
  </svg>
);

const menus = [
  ['文件', 'F'], ['编辑', 'E'], ['视图', 'V'], ['插入', 'I'], ['格式', 'O'], ['工具', 'T'],
  ['绘图', 'D'], ['标注', 'N'], ['修改', 'M'], ['窗口', 'W'], ['帮助', 'H'],
];

const standardTools = [
  'newDoc', 'open', 'save', '|', 'print', 'preview', 'publish', '|', 'cut', 'copy', 'paste', 'match', '|',
  'undo', 'drop', 'redo', 'drop', '|', 'pan', 'zoomRt', 'zoomWin', 'zoomPrev', '|', 'props', 'center', 'palettes', '|', 'help',
];

const drawTools = [
  'line', 'xline', 'pline', 'polygon', 'rect', 'arc', 'circle', 'cloud', 'spline', 'ellipse', 'ellArc',
  'insert', 'block', 'point', 'hatch', 'region', 'mtext',
];

const modifyTools = [
  'erase', 'copyObj', 'mirror', 'offset', 'array', 'move', 'rotate', 'scale', 'stretch', 'trim', 'extend',
  'breakPt', 'breakObj', 'chamfer', 'fillet', 'explode',
];

const tasks = [
  ['word', 'AVR检验文件 -...'],
  ['photoshop', 'Adobe Photoshop'],
  ['disk', '本地磁盘 (E:)'],
  ['acad', 'AutoCAD 2004 ...'],
  ['ie', '急!!!CAD图形C...'],
];

const navPaths = ['M2 1v8M9 1L4 5l5 4z', 'M7 1L2 5l5 4z', 'M3 1l5 4-5 4z', 'M1 1l5 4-5 4zM8 1v8'];

const Tool = ({ name }) => (
  <ToolButton $narrow={name === 'drop'} aria-label={name}><Glyph name={name} /></ToolButton>
);

const App = () => {
  const [tab, setTab] = useState('模型');

  return (
    <Page>
      <GlobalStyle />
      <Desktop>
        <WindowArea>
          <Window>
            <TitleBar>
              <Glyph name="acad" />
              <Title>AutoCAD 2004 - [E:\AF-1C1.dwg]</Title>
              <CaptionButton aria-label="Minimize">
                <svg width="13" height="13"><path d="M2 10h6" stroke="#fff" strokeWidth="3" /></svg>
              </CaptionButton>
              <CaptionButton aria-label="Maximize">
                <svg width="13" height="13"><path d="M1 2.5h11" stroke="#fff" strokeWidth="3" /><path d="M1.5 2.5h10v9h-10z" fill="none" stroke="#fff" /></svg>
              </CaptionButton>
              <CaptionButton $close aria-label="Close">
                <svg width="13" height="13"><path d="M2 2l9 9M11 2l-9 9" stroke="#fff" strokeWidth="2" /></svg>
              </CaptionButton>
            </TitleBar>

            <MenuBar>
              <Glyph name="dwg" />
              <Menus>
                {menus.map(([text, key]) => (
                  <MenuItem key={key}>{text}(<u>{key}</u>)</MenuItem>
                ))}
              </Menus>
              <MdiButton aria-label="Minimize drawing">
                <svg width="10" height="10"><path d="M2 8h5" stroke="#555" strokeWidth="2" /></svg>
              </MdiButton>
              <MdiButton aria-label="Restore drawing">
                <svg width="10" height="10"><path d="M3 1h6.5v5M1 4h6v5H1z" fill="none" stroke="#555" /><path d="M3 1h7M1 4h6" stroke="#555" strokeWidth="2" /></svg>
              </MdiButton>
              <MdiButton aria-label="Close drawing">
                <svg width="10" height="10"><path d="M2 2l6 6M8 2L2 8" stroke="#555" strokeWidth="2" /></svg>
              </MdiButton>
            </MenuBar>

            <ToolbarRow>
              <Toolbar>
                <Grip />
                {standardTools.map((name, i) => (
                  name === '|' ? <Separator key={i} /> : <Tool key={i} name={name} />
                ))}
              </Toolbar>
              <Toolbar>
                <Grip />
                <Tool name="textStyle" />
                <Combo label="Text style" value="Standard" width={101} />
                <Separator />
                <Tool name="dimStyle" />
                <Combo label="Dimension style" value="Standard" width={101} />
              </Toolbar>
            </ToolbarRow>

            <ToolbarRow>
              <Toolbar>
                <Grip />
                <Tool name="layers" />
                <Combo label="Layer" value="0" width={300}>
                  <Glyph name="bulb" />
                  <Glyph name="sun" />
                  <Glyph name="vpFreeze" />
                  <Glyph name="lock" />
                  <Swatch />
                </Combo>
                <Tool name="layerSet" />
                <Tool name="layerPrev" />
              </Toolbar>
              <Toolbar>
                <Grip />
                <Combo label="Color" value="ByLayer" width={151}><Swatch /></Combo>
                <Separator />
                <Combo label="Linetype" value="ByLayer" width={161}><LineSample $length={60} /></Combo>
                <Separator />
                <Combo label="Lineweight" value="ByLayer" width={125}><LineSample $length={36} /></Combo>
                <Separator />
                <Combo label="Plot style" value="ByColor" width={121}> </Combo>
              </Toolbar>
            </ToolbarRow>

            <Workspace>
              <Palette>
                <Grip $across />
                {drawTools.map(name => <Tool key={name} name={name} />)}
              </Palette>
              <Frame>
                <Viewport><Model /></Viewport>
                <VScroll>
                  <ScrollButton aria-label="Scroll up"><Chevron dir="up" /></ScrollButton>
                  <ScrollButton aria-label="Scroll down"><Chevron dir="down" /></ScrollButton>
                </VScroll>
                <TabStrip>
                  {navPaths.map((d, i) => (
                    <TabNav key={d} aria-label={`Layout nav ${i + 1}`}>
                      <svg width="10" height="10"><path d={d} stroke="#000" /></svg>
                    </TabNav>
                  ))}
                  <Tabs>
                    {['模型', '布局1', '布局2'].map(name => (
                      <Tab key={name} $active={tab === name} onClick={() => setTab(name)}>
                        <TabLabel $active={tab === name}>{name}</TabLabel>
                      </Tab>
                    ))}
                  </Tabs>
                  <HScroll>
                    <HScrollEdge>
                      <SplitHandle />
                      <ScrollButton aria-label="Scroll left"><Chevron dir="left" /></ScrollButton>
                    </HScrollEdge>
                    <ScrollButton aria-label="Scroll right"><Chevron dir="right" /></ScrollButton>
                  </HScroll>
                </TabStrip>
              </Frame>
              <Palette>
                <Grip $across />
                {modifyTools.map(name => <Tool key={name} name={name} />)}
              </Palette>
            </Workspace>

            <Divider />

            <CommandArea>
              <Grip />
              <CommandBox>
                <History>
                  <HistoryLines>
                    <div>命令: '_pan</div>
                    <div>命令: 按 ESC 或 ENTER 键退出，或者单击鼠标右键显示快捷菜单。</div>
                  </HistoryLines>
                  <HistoryScroll>
                    <ScrollButton $live $short aria-label="History up"><Chevron dir="up" /></ScrollButton>
                    <ScrollButton $live $short aria-label="History down"><Chevron dir="down" /></ScrollButton>
                  </HistoryScroll>
                </History>
                <CommandLine>
                  <CommandInput aria-label="Command" />
                  <CommandScroll>
                    <ScrollButton $live $short aria-label="Command left"><Chevron dir="left" /></ScrollButton>
                    <Thumb />
                    <ScrollButton $live $short aria-label="Command right"><Chevron dir="right" /></ScrollButton>
                  </CommandScroll>
                  <Corner />
                </CommandLine>
              </CommandBox>
            </CommandArea>

            <StatusBar>
              <span>按 ESC 或 ENTER 键退出，或者单击鼠标右键显示快捷菜单。</span>
              <svg width="12" height="12" aria-hidden="true">
                <path d="M8 1h3M4 5h3M8 5h3M0 9h3M4 9h3M8 9h3" stroke="#b8b4a2" strokeWidth="2" />
              </svg>
            </StatusBar>
          </Window>
        </WindowArea>

        <TaskBar>
          <StartButton>
            <svg width="18" height="18" viewBox="0 0 18 18" aria-hidden="true">
              <path d="M3 2c2-1 4-1 6 0L7 8C5 7 3 7 1 8z" fill="#e8502c" />
              <path d="M10 3c2 1 4 1 7 0l-2 6c-2 1-4 1-7 0z" fill="#7cc43c" />
              <path d="M1 10c2-1 4-1 6 0l-2 6c-2-1-4-1-5 0z" fill="#3c7ce8" />
              <path d="M8 11c2 1 4 1 7 0l-2 6c-2 1-4 1-7 0z" fill="#f8cc2c" />
            </svg>
            开始
          </StartButton>
          <Tasks>
            {tasks.map(([icon, text]) => (
              <Task key={text} $active={icon === 'acad'}><Glyph name={icon} />{text}</Task>
            ))}
          </Tasks>
          <LanguageBar>
            <Glyph name="keyboard" />
            <Glyph name="helpBox" />
            <Glyph name="restoreBar" />
          </LanguageBar>
          <Tray>
            <TrayToggle aria-label="Show hidden icons">
              <svg width="18" height="18"><circle cx="9" cy="9" r="8.5" fill="#2a86e8" stroke="#7cc0f8" /><path d="M10.5 5L6.5 9l4 4" fill="none" stroke="#fff" strokeWidth="2" /></svg>
            </TrayToggle>
            <Glyph name="shield" />
            <Glyph name="qq" />
            <Glyph name="kav" />
            <Clock>15:56</Clock>
          </Tray>
        </TaskBar>
      </Desktop>
    </Page>
  );
};

export default App;
